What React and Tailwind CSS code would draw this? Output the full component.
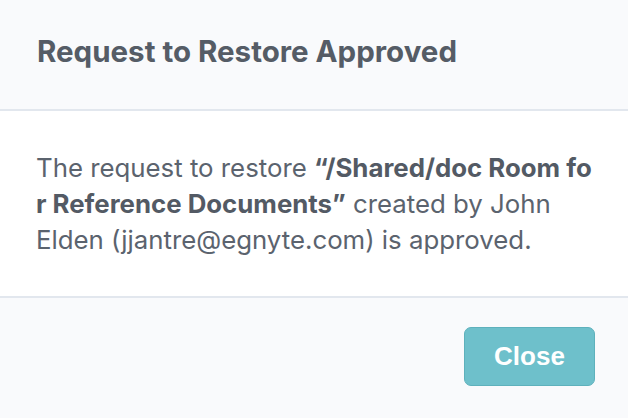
import React from 'react';

const App = () => {
    return (
        <div className="w-[628px] h-[418px] flex flex-col bg-white font-['Inter',sans-serif] overflow-hidden">
            <header className="h-[111px] shrink-0 flex items-center px-[37px] bg-[#f9fafc] border-b-2 border-[#e2e7ee]">
                <h1 className="text-[29.5px] font-bold text-[#555c66] pb-[7px]">
                    Request to Restore Approved
                </h1>
            </header>
            <main className="h-[187px] shrink-0 flex items-center px-[36px] bg-white border-b-2 border-[#e2e7ee]">
                <p className="text-[25.8px] leading-[36px] text-[#5b636e] break-all">
                    The request to restore <strong className="font-bold text-[#535a64]">“/Shared/doc Room for Reference Documents”</strong> created by John <span className="inline-block">Elden</span> (jjantre@egnyte.com) is approved.
                </p>
            </main>
            <footer className="flex-1 flex items-start justify-end pt-[29px] pr-[33px] bg-[#f9fafc]">
                <button className="w-[131px] h-[59px] rounded-[7px] bg-[#6ec0cb] border border-[#5eb1bc] text-white text-[26px] font-bold font-['Liberation_Sans',sans-serif]">
                    Close
                </button>
            </footer>
        </div>
    );
};

export default App;
